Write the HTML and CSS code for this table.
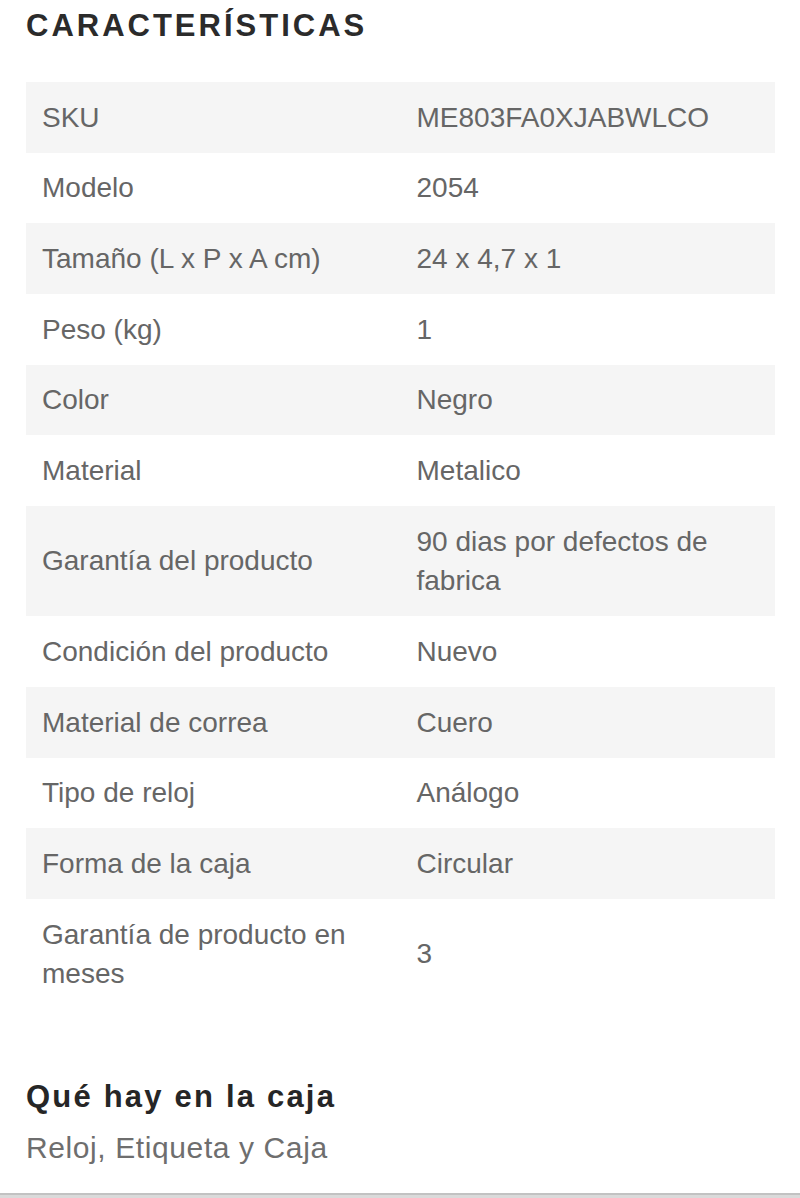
FILE: index.html
```html
<!DOCTYPE html>
<html lang="es">
<head>
<meta charset="utf-8">
<title>Características</title>
<link rel="stylesheet" href="styles.css">
</head>
<body>
<div class="page">
  <section class="specs">
    <h2 class="specs-title">CARACTERÍSTICAS</h2>
    <table class="specs-table">
      <tbody>
        <tr><td>SKU</td><td>ME803FA0XJABWLCO</td></tr>
        <tr><td>Modelo</td><td>2054</td></tr>
        <tr><td>Tamaño (L x P x A cm)</td><td>24 x 4,7 x 1</td></tr>
        <tr><td>Peso (kg)</td><td>1</td></tr>
        <tr><td>Color</td><td>Negro</td></tr>
        <tr><td>Material</td><td>Metalico</td></tr>
        <tr><td>Garantía del producto</td><td>90 dias por defectos de fabrica</td></tr>
        <tr><td>Condición del producto</td><td>Nuevo</td></tr>
        <tr><td>Material de correa</td><td>Cuero</td></tr>
        <tr><td>Tipo de reloj</td><td>Análogo</td></tr>
        <tr><td>Forma de la caja</td><td>Circular</td></tr>
        <tr><td>Garantía de producto en meses</td><td>3</td></tr>
      </tbody>
    </table>
  </section>
  <section class="box">
    <h3 class="box-title">Qué hay en la caja</h3>
    <p class="box-text">Reloj, Etiqueta y Caja</p>
  </section>
  <div class="bottom-rule"></div>
</div>
</body>
</html>
```

FILE: styles.css
```css
html, body {
  margin: 0;
  padding: 0;
  background: #ffffff;
}

body {
  font-family: "Liberation Sans", Arial, sans-serif;
  height: 1198px;
  overflow: hidden;
}

.page {
  display: flex;
  flex-direction: column;
  height: 1198px;
}

.specs {
  padding: 8px 0 0 26px;
}

.specs-title {
  margin: 0 0 39px 0;
  font-size: 31px;
  line-height: 35px;
  font-weight: 700;
  letter-spacing: 3px;
  color: #2b2b2b;
}

.specs-table {
  width: 749px;
  table-layout: fixed;
  border-collapse: collapse;
  border-spacing: 0;
  font-size: 28px;
  line-height: 39.5px;
  color: #666666;
}

.specs-table td {
  width: 50%;
  padding: 15.6px 16px 15.6px 16px;
  vertical-align: middle;
  text-align: left;
}

.specs-table tr:nth-child(odd) td {
  background: #f5f5f5;
}

.box {
  padding: 70px 0 0 26px;
}

.box-title {
  margin: 0 0 15px 0;
  font-size: 31px;
  line-height: 36px;
  font-weight: 700;
  letter-spacing: 2.2px;
  color: #262626;
}

.box-text {
  margin: 0;
  font-size: 30px;
  line-height: 36px;
  letter-spacing: 0.6px;
  color: #6e6e6e;
}

.bottom-rule {
  margin-top: auto;
  height: 3px;
  border-top: 2px solid #c2c2c2;
  background: #dadada;
}
```
